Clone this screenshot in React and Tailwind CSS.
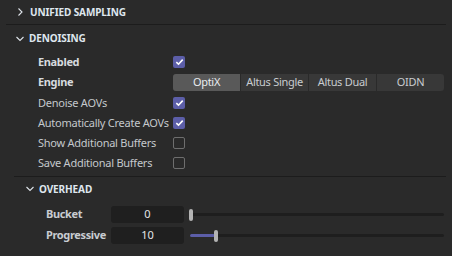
import React from 'react';

const font = { fontFamily: '"Noto Sans", "Open Sans", sans-serif' };

const ChevronRight = () => (
  <svg width="8" height="10" viewBox="0 0 8 10" className="shrink-0">
    <path d="M2.5 1.5 L6 5 L2.5 8.5" fill="none" stroke="#dfe4ea" strokeWidth="1.1" />
  </svg>
);

const ChevronDown = () => (
  <svg width="10" height="8" viewBox="0 0 10 8" className="shrink-0">
    <path d="M1.5 2 L5 5.5 L8.5 2" fill="none" stroke="#dfe4ea" strokeWidth="1.1" />
  </svg>
);

const Checkbox = ({ checked }) =>
  checked ? (
    <div className="w-[12px] h-[12px] rounded-[2px] bg-[#5c5ea8] flex items-center justify-center">
      <svg width="9" height="8" viewBox="0 0 9 8">
        <path d="M1.3 4.2 L3.5 6.2 L7.7 1.6" fill="none" stroke="#ffffff" strokeWidth="1.6" />
      </svg>
    </div>
  ) : (
    <div className="w-[12px] h-[12px] rounded-[2px] border-[1.5px] border-[#6e6e6e]" />
  );

const Row = ({ label, bold, children, h = 'h-[20px]' }) => (
  <div className={`flex items-center ${h}`}>
    <div
      className={`w-[173px] shrink-0 pl-[38px] text-[11px] tracking-[-0.25px] whitespace-nowrap ${
        bold ? 'font-bold tracking-[-0.35px] text-[#d6dadf]' : 'text-[#c4c8cc]'
      }`}
    >
      {label}
    </div>
    {children}
  </div>
);

const engines = ['OptiX', 'Altus Single', 'Altus Dual', 'OIDN'];

const SliderRow = ({ label, value, pct }) => (
  <div className="flex items-center h-[21px]">
    <div className="w-[111px] shrink-0 pl-[46px] text-[11px] font-bold tracking-[-0.35px] text-[#c8ccd1] whitespace-nowrap">
      {label}
    </div>
    <div className="w-[73px] shrink-0 h-[17px] rounded-[3px] bg-[#1f1f1f] flex items-center justify-center text-[11px] text-[#e4e6e8]">
      {value}
    </div>
    <div className="relative flex-1 ml-[6px] mr-[8px] h-[17px] flex items-center">
      <div className="w-full h-[3px] rounded-full bg-[#1e1e1e]" />
      <div
        className="absolute left-0 h-[3px] rounded-full bg-[#5c5ea8]"
        style={{ width: `${pct}%` }}
      />
      <div
        className="absolute w-[4px] h-[12px] rounded-[2px] bg-[#b4b4b4]"
        style={{ left: `calc(${pct}% - 1px)` }}
      />
    </div>
  </div>
);

export default function App() {
  return (
    <div className="w-[452px] h-[256px] bg-[#2a2a2a] overflow-hidden" style={font}>
      {/* Unified Sampling */}
      <div className="h-[24px] flex items-center pl-[16px] gap-[6px]">
        <ChevronRight />
        <span className="text-[10px] font-bold tracking-[-0.1px] text-[#dfe6ee]">UNIFIED SAMPLING</span>
      </div>
      <div className="ml-[6px] mr-[6px] h-[1px] bg-[#1c1c1c]" />

      {/* Denoising */}
      <div className="h-[27px] flex items-center pl-[15px] gap-[4px]">
        <ChevronDown />
        <span className="text-[10px] font-bold tracking-[-0.1px] text-[#dfe6ee]">DENOISING</span>
      </div>
      <Row label="Enabled" bold>
        <Checkbox checked />
      </Row>
      <Row label="Engine" bold h="h-[21px]">
        <div className="w-[271px] h-[17px] rounded-[3px] bg-[#383838] flex text-[11px] tracking-[-0.3px] text-[#c8ccd0] overflow-hidden">
          {engines.map((e, i) => (
            <div
              key={e}
              className={`flex-1 flex items-center justify-center ${
                i === 0 ? 'bg-[#595959] text-[#e8ecf0]' : ''
              } ${i > 0 ? 'border-l border-[#2a2a2a]' : ''}`}
            >
              {e}
            </div>
          ))}
        </div>
      </Row>
      <Row label="Denoise AOVs">
        <Checkbox checked />
      </Row>
      <Row label="Automatically Create AOVs">
        <Checkbox checked />
      </Row>
      <Row label="Show Additional Buffers">
        <Checkbox />
      </Row>
      <Row label="Save Additional Buffers">
        <Checkbox />
      </Row>
      <div className="h-[3px]" />
      <div className="ml-[14px] mr-[6px] h-[1px] bg-[#1c1c1c]" />

      {/* Overhead */}
      <div className="h-[24px] flex items-center pl-[25px] gap-[4px]">
        <ChevronDown />
        <span className="text-[10px] font-bold tracking-[-0.1px] text-[#dfe6ee]">OVERHEAD</span>
      </div>
      <div className="h-[3px]" />
      <SliderRow label="Bucket" value="0" pct={0} />
      <SliderRow label="Progressive" value="10" pct={10} />
    </div>
  );
}
